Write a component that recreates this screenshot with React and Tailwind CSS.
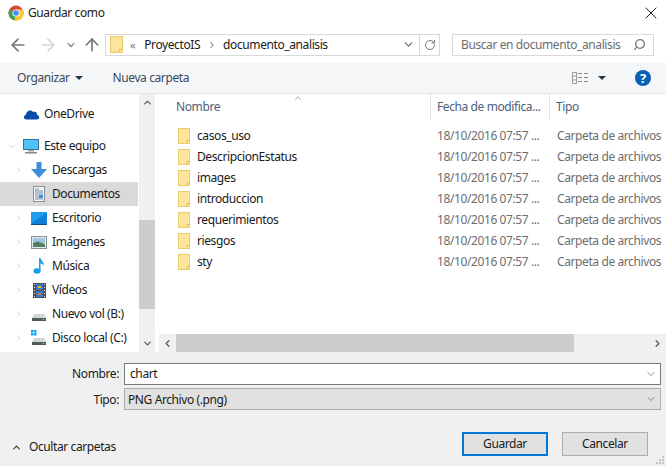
import { ArrowLeft, ArrowRight, ArrowUp, ChevronDown, ChevronRight, ChevronUp, ChevronLeft, RotateCw, Search, X } from 'lucide-react';

// ── Small drawn icons ─────────────────────────────────────────────────────────
function ChromeLogo() {
  return (
    <svg width="16" height="16" viewBox="0 0 16 16" className="shrink-0">
      <circle cx="8" cy="8" r="7.5" fill="#db4437" />
      <path d="M8 8 L1.5 4.2 A7.5 7.5 0 0 0 6.5 15.3 Z" fill="#3aa757" />
      <path d="M8 4.5 H15 A7.5 7.5 0 0 1 6.5 15.3 L8 8 Z" fill="#fcc934" />
      <circle cx="8" cy="8" r="3.6" fill="#fff" />
      <circle cx="8" cy="8" r="2.8" fill="#4c8bf5" />
    </svg>
  );
}

function FolderIcon({ large }) {
  const size = large ? 'w-[13px] h-[17px]' : 'w-[12px] h-[16px]';
  return (
    <svg viewBox="0 0 12 16" preserveAspectRatio="none" className={`${size} shrink-0`}>
      <rect x="0.5" y="0.5" width="11" height="15" fill="#fde69b" stroke="#eccb6c" />
      <path d="M9 15.5 V12.5 H11.5" fill="none" stroke="#e3bd55" />
    </svg>
  );
}

function Cloud() {
  return (
    <svg width="17" height="12" viewBox="0 0 17 12">
      <path d="M3.5 11.5 C0.5 11.5 0 7.5 2.8 7 C3 3 8 1 10 4 C13 3 14.5 5.5 14 7 C17 7.5 17 11.5 14 11.5 Z" fill="#0a4da8" />
    </svg>
  );
}

function Monitor() {
  return (
    <svg width="16" height="15" viewBox="0 0 16 15">
      <rect x="0.5" y="0.5" width="15" height="10" fill="#4fc3f7" stroke="#3b6f99" />
      <rect x="5" y="11" width="6" height="1.5" fill="#9aa5ad" />
      <rect x="2" y="13" width="12" height="1.5" fill="#7f8c95" />
    </svg>
  );
}

function DownArrow() {
  return (
    <svg width="16" height="16" viewBox="0 0 16 16">
      <path d="M5.5 0 H10.5 V7 H16 L8 16 L0 7 H5.5 Z" fill="#3d8fdc" />
    </svg>
  );
}

function DocIcon() {
  return (
    <svg width="12" height="16" viewBox="0 0 12 16">
      <rect x="0.5" y="0.5" width="11" height="15" fill="#f4f6f7" stroke="#8b8f93" />
      <path d="M2 3 H6 M2 5 H10 M2 7 H10 M2 9 H10 M2 11 H10 M2 13 H10" stroke="#6f8fa8" />
      <rect x="6" y="9" width="4" height="3" fill="#3d8fdc" />
    </svg>
  );
}

function Desktop() {
  return (
    <svg width="16" height="13" viewBox="0 0 16 13">
      <rect width="16" height="12" fill="#1c9bf0" />
      <path d="M0 11.5 L16 1 V12 H0 Z" fill="#0f7fd4" />
      <rect y="12" width="16" height="1" fill="#0d4f86" />
    </svg>
  );
}

function Picture() {
  return (
    <svg width="16" height="13" viewBox="0 0 16 13">
      <rect x="0.5" y="0.5" width="15" height="12" fill="#dfeaf2" stroke="#8b9096" />
      <rect x="2" y="2" width="12" height="5" fill="#9fc6e3" />
      <path d="M2 7 L7 5.5 L14 8 V11 H2 Z" fill="#4f7f5e" />
    </svg>
  );
}

function Note() {
  return (
    <svg width="12" height="16" viewBox="0 0 12 16">
      <ellipse cx="4" cy="13" rx="3.6" ry="2.8" fill="#18a0ee" />
      <path d="M6 13 V0 H7.5 C8 3 11.5 4 11 8 C10 6 8.5 5.5 7.5 5.5 V13 Z" fill="#18a0ee" />
    </svg>
  );
}

function Film() {
  return (
    <svg width="13" height="15" viewBox="0 0 13 15">
      <rect width="13" height="15" fill="#4a4f55" />
      <rect x="3" y="1" width="7" height="6" fill="#3f78c9" />
      <rect x="3" y="8" width="7" height="6" fill="#3f78c9" />
      <rect x="5" y="3" width="3" height="2" fill="#e8b93a" />
      <rect x="5" y="10" width="3" height="2" fill="#d8743a" />
      <path d="M1 1.5 H2 M1 4.5 H2 M1 7.5 H2 M1 10.5 H2 M1 13.5 H2 M11 1.5 H12 M11 4.5 H12 M11 7.5 H12 M11 10.5 H12 M11 13.5 H12" stroke="#e5e5e5" />
    </svg>
  );
}

function Drive({ windows }) {
  return (
    <svg width="16" height="16" viewBox="0 0 16 16">
      {windows && (
        <g fill="#18a0ee">
          <rect x="0" y="0" width="2.5" height="2.5" />
          <rect x="3" y="0" width="2.5" height="2.5" />
          <rect x="0" y="3" width="2.5" height="2.5" />
          <rect x="3" y="3" width="2.5" height="2.5" />
        </g>
      )}
      <path d="M3 8 H13 L15 12 H1 Z" fill="#d3d7da" />
      <rect x="1" y="12" width="14" height="3" fill="#55595e" />
      <rect x="11.5" y="13" width="2" height="1" fill="#5fd35f" />
    </svg>
  );
}

function ViewIcon() {
  return (
    <svg width="17" height="12" viewBox="0 0 17 12">
      <path d="M0.5 0.5 H4.5 V11.5 H0.5 Z M0.5 4 H4.5 M0.5 8 H4.5" fill="none" stroke="#9a9a9a" />
      <path d="M6 1.5 H10 M12 1.5 H16 M6 5.5 H10 M12 5.5 H16 M6 9.5 H10 M12 9.5 H16" stroke="#8a8a8a" />
    </svg>
  );
}

function ResizeGrip() {
  return (
    <svg width="8" height="8" viewBox="0 0 8 8" className="absolute right-[2px] bottom-[2px]">
      <path d="M6 0 h2 v2 h-2 Z M3 3 h2 v2 h-2 Z M6 3 h2 v2 h-2 Z M0 6 h2 v2 h-2 Z M3 6 h2 v2 h-2 Z M6 6 h2 v2 h-2 Z" fill="#c4c4c4" />
    </svg>
  );
}

// ── Data ──────────────────────────────────────────────────────────────────────
const TREE = [
  { label: 'Descargas', icon: <DownArrow /> },
  { label: 'Documentos', icon: <DocIcon />, selected: true },
  { label: 'Escritorio', icon: <Desktop /> },
  { label: 'Imágenes', icon: <Picture /> },
  { label: 'Música', icon: <Note /> },
  { label: 'Vídeos', icon: <Film /> },
  { label: 'Nuevo vol (B:)', icon: <Drive /> },
  { label: 'Disco local (C:)', icon: <Drive windows /> },
];

const FOLDERS = ['casos_uso', 'DescripcionEstatus', 'images', 'introduccion', 'requerimientos', 'riesgos', 'sty'];

export default function App() {
  return (
    <div className="w-[666px] h-[466px] overflow-hidden bg-white flex flex-col text-[12px] leading-4 tracking-[-0.4px] text-[#1a1a1a] font-['Noto_Sans','Open_Sans',sans-serif]">
      {/* Title bar */}
      <div className="h-[26px] flex items-center pl-2 pr-[5px] shrink-0">
        <ChromeLogo />
        <span className="ml-1 text-[#222]">Guardar como</span>
        <X className="ml-auto w-[20px] h-[20px] text-[#222]" strokeWidth={1.2} />
      </div>

      {/* Navigation row */}
      <div className="h-[37px] flex items-center shrink-0 pl-[8px] pr-3">
        <ArrowLeft className="w-[20px] h-[20px] text-[#777]" strokeWidth={2} />
        <ArrowRight className="ml-[10px] w-[20px] h-[20px] text-[#d4d4d4]" strokeWidth={2} />
        <ChevronDown className="ml-[7px] w-[12px] h-[12px] text-[#8a8a8a]" strokeWidth={2.5} />
        <ArrowUp className="ml-[5px] w-[20px] h-[20px] text-[#777]" strokeWidth={2} />
        <div className="ml-[3px] w-[335px] h-[22px] border border-[#d9d9d9] flex items-center pl-[4px]">
          <FolderIcon large />
          <span className="ml-[7px] text-[#777] text-[11px]">«</span>
          <span className="ml-[9px]">ProyectoIS</span>
          <ChevronRight className="ml-[7px] w-[10px] h-[10px] text-[#777]" strokeWidth={2.5} />
          <span className="ml-[6px]">documento_analisis</span>
          <ChevronDown className="ml-auto mr-[4px] w-[13px] h-[13px] text-[#666]" strokeWidth={2} />
          <div className="w-[20px] h-full border-l border-[#d9d9d9] flex items-center justify-center">
            <RotateCw className="w-[12px] h-[12px] text-[#777]" strokeWidth={2} />
          </div>
        </div>
        <div className="ml-auto w-[202px] h-[22px] border border-[#d9d9d9] flex items-center pl-[8px] pr-[7px] text-[#6d6d6d]">
          <span>Buscar en documento_analisis</span>
          <Search className="ml-auto w-[13px] h-[13px] -scale-x-100 text-[#777]" strokeWidth={2.4} />
        </div>
      </div>

      {/* Toolbar */}
      <div className="h-[31px] bg-[#f5f6f7] border-b border-[#e5e5e5] flex items-center pl-[17px] pr-[15px] shrink-0 text-[#3a4a5c]">
        <span>Organizar</span>
        <span className="ml-[5px] w-0 h-0 border-x-[4px] border-x-transparent border-t-[4px] border-t-[#24364f]" />
        <span className="ml-[30px]">Nueva carpeta</span>
        <div className="ml-auto mr-[29px] flex items-center gap-[9px]">
          <ViewIcon />
          <span className="w-0 h-0 border-x-[4px] border-x-transparent border-t-[4px] border-t-[#24364f]" />
        </div>
        <span className="w-[16px] h-[16px] rounded-full bg-[#0a5fb4] text-white text-[13px] font-bold flex items-center justify-center">?</span>
      </div>

      {/* Main panes */}
      <div className="h-[258px] flex shrink-0">
        {/* Tree */}
        <div className="w-[139px] pt-[8px] pr-[1px] shrink-0 overflow-hidden">
          <div className="h-[24px] flex items-center pl-[23px] gap-[4px]">
            <Cloud />
            <span>OneDrive</span>
          </div>
          <div className="h-[8px]" />
          <div className="h-[24px] flex items-center pl-[6px]">
            <ChevronDown className="w-[11px] h-[11px] text-[#d0d0d0]" strokeWidth={2} />
            <span className="ml-[6px]"><Monitor /></span>
            <span className="ml-[5px]">Este equipo</span>
          </div>
          {TREE.map(item => (
            <div key={item.label} className={`h-[24px] flex items-center pl-[13px] ${item.selected ? 'bg-[#d9d9d9]' : ''}`}>
              <ChevronRight className="w-[11px] h-[11px] text-[#d8d8d8]" strokeWidth={2} />
              <span className="ml-[7px] w-[16px] flex justify-center">{item.icon}</span>
              <span className="ml-[5px] whitespace-nowrap">{item.label}</span>
            </div>
          ))}
        </div>

        {/* Tree scrollbar */}
        <div className="w-[16px] bg-[#f0f0f0] flex flex-col shrink-0">
          <div className="h-[17px] flex items-center justify-center">
            <ChevronUp className="w-[11px] h-[11px] text-[#606060]" strokeWidth={3} />
          </div>
          <div className="h-[109px]" />
          <div className="h-[89px] bg-[#cdcdcd]" />
          <div className="flex-1" />
          <div className="h-[17px] flex items-center justify-center">
            <ChevronDown className="w-[11px] h-[11px] text-[#606060]" strokeWidth={3} />
          </div>
        </div>

        {/* File list */}
        <div className="flex-1 min-w-0 flex flex-col pl-[4px]">
          <div className="h-[26px] flex shrink-0 relative text-[#4c607a]">
            <ChevronUp className="absolute left-[134px] -top-[1px] w-[10px] h-[10px] text-[#777]" strokeWidth={1.5} />
            <div className="w-[272px] pl-[17px] pt-[5px] shrink-0 border-r border-[#e5e5e5]">Nombre</div>
            <div className="w-[119px] pl-[6px] pt-[5px] shrink-0 border-r border-[#e5e5e5] whitespace-nowrap">Fecha de modifica...</div>
            <div className="pl-[6px] pt-[5px]">Tipo</div>
          </div>
          <div className="flex-1 pt-[5px] overflow-hidden">
            {FOLDERS.map(name => (
              <div key={name} className="h-[21px] flex items-center whitespace-nowrap">
                <div className="w-[272px] pl-[19px] flex items-center gap-[7px] shrink-0">
                  <FolderIcon />
                  <span>{name}</span>
                </div>
                <div className="w-[119px] pl-[6px] shrink-0 text-[#6d6d6d]">18/10/2016 07:57 ...</div>
                <div className="pl-[7px] text-[#6d6d6d]">Carpeta de archivos</div>
              </div>
            ))}
          </div>
          {/* Horizontal scrollbar */}
          <div className="h-[18px] bg-[#f0f0f0] flex items-stretch shrink-0">
            <div className="w-[17px] flex items-center justify-center">
              <ChevronLeft className="w-[11px] h-[11px] text-[#606060]" strokeWidth={3} />
            </div>
            <div className="w-[398px] bg-[#cdcdcd]" />
            <div className="ml-auto w-[17px] flex items-center justify-center">
              <ChevronRight className="w-[11px] h-[11px] text-[#606060]" strokeWidth={3} />
            </div>
          </div>
        </div>
      </div>

      {/* Bottom form */}
      <div className="flex-1 bg-[#f0f0f0] flex flex-col relative">
        <div className="pt-[11px] pr-[5px] flex flex-col gap-[3px]">
          <div className="flex items-center">
            <span className="w-[119px] text-right">Nombre:</span>
            <div className="ml-[5px] flex-1 h-[22px] bg-white border border-[#7a7a7a] flex items-center pl-[5px] pr-[3px]">
              <span>chart</span>
              <ChevronDown className="ml-auto w-[12px] h-[12px] text-[#666]" strokeWidth={1.5} />
            </div>
          </div>
          <div className="flex items-center">
            <span className="w-[119px] text-right pt-[2px]">Tipo:</span>
            <div className="ml-[5px] flex-1 h-[22px] bg-[#e1e1e1] border border-[#adadad] flex items-center pl-[3px] pr-[3px]">
              <span className="pt-[2px]">PNG Archivo (.png)</span>
              <ChevronDown className="ml-auto w-[12px] h-[12px] text-[#666]" strokeWidth={1.5} />
            </div>
          </div>
        </div>
        <div className="mt-[22px] flex items-center pl-[11px] pr-[18px]">
          <ChevronUp className="w-[11px] h-[11px] text-[#333] mt-[6px]" strokeWidth={2.5} />
          <span className="ml-[7px] mt-[6px]">Ocultar carpetas</span>
          <button className="ml-auto w-[86px] h-[24px] bg-[#e1e1e1] border-2 border-[#0078d7]">Guardar</button>
          <button className="ml-[14px] w-[86px] h-[24px] bg-[#e1e1e1] border border-[#adadad]">Cancelar</button>
        </div>
        <ResizeGrip />
      </div>
    </div>
  );
}
